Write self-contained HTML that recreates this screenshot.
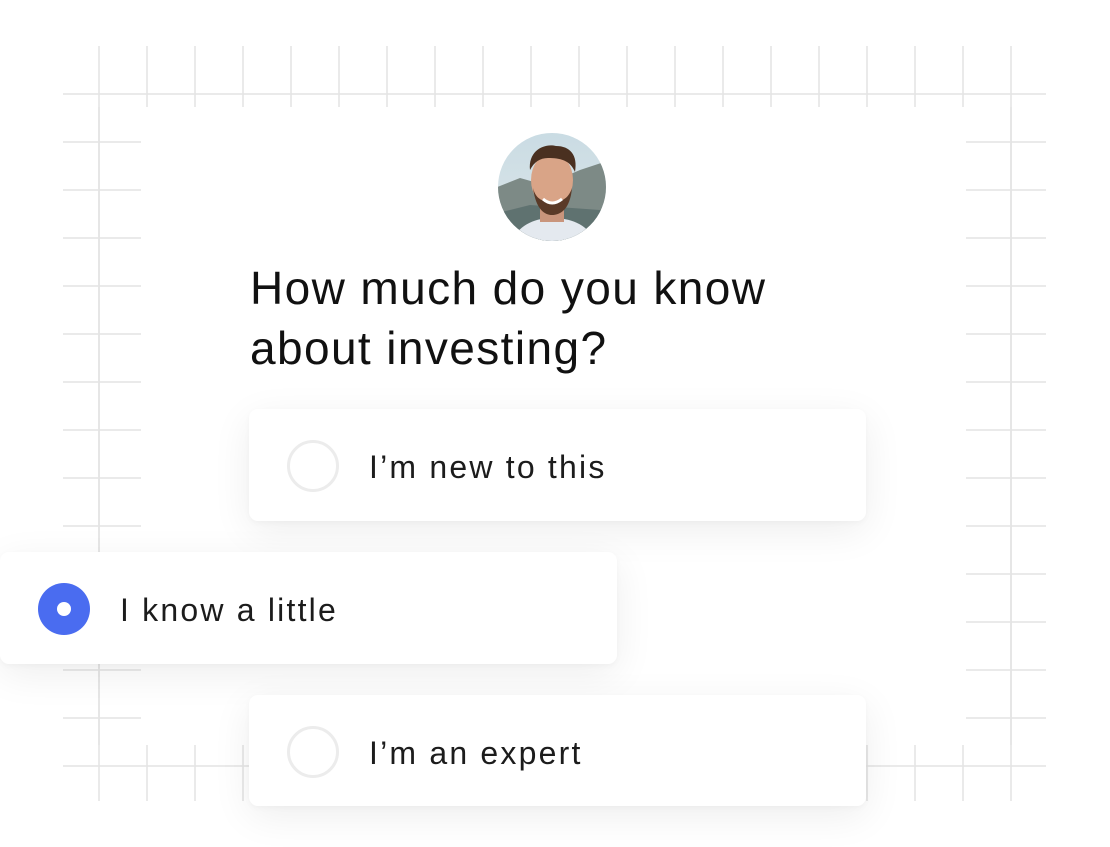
<!DOCTYPE html>
<html><head><style>
body{margin:0;width:1110px;height:847px;background:#fff;position:relative;overflow:hidden;font-family:"Liberation Sans",sans-serif;}
.abs{position:absolute}
.card{position:absolute;background:#fff;border-radius:9px;box-shadow:0 10px 40px rgba(0,0,0,0.07),0 2px 6px rgba(0,0,0,0.03);}
.card span{position:absolute;top:39px;font-size:32px;line-height:38px;color:#1c1c1c;letter-spacing:2.2px}
.radio{position:absolute;width:52px;height:52px;border:3px solid #ececec;border-radius:50%;box-sizing:border-box}
</style></head><body>
<svg class="abs" style="left:0;top:0" width="1110" height="847">
<g stroke="#e4e4e4" stroke-width="1.6">
<path d="M63 94H1046M63 766H1046"/>
<path d="M63 142H1046M63 190H1046M63 238H1046M63 286H1046M63 334H1046M63 382H1046M63 430H1046M63 478H1046M63 526H1046M63 574H1046M63 622H1046M63 670H1046M63 718H1046"/>
<path d="M99 46V801M147 46V801M195 46V801M243 46V801M291 46V801M339 46V801M387 46V801M435 46V801M483 46V801M531 46V801M579 46V801M627 46V801M675 46V801M723 46V801M771 46V801M819 46V801M867 46V801M915 46V801M963 46V801M1011 46V801"/>
</g>
<rect x="141" y="107" width="825" height="638" fill="#fff"/>
<path d="M99 107V745M1011 107V745" stroke="#e4e4e4" stroke-width="1.6"/>
<defs><clipPath id="c"><circle cx="552" cy="187" r="54"/></clipPath>
<linearGradient id="sky" x1="0" y1="0" x2="0" y2="1"><stop offset="0" stop-color="#c9dbe3"/><stop offset="1" stop-color="#dfe8ea"/></linearGradient></defs>
<g clip-path="url(#c)">
<rect x="490" y="130" width="130" height="120" fill="url(#sky)"/>
<path d="M490 190 L520 178 L545 185 L580 170 L610 160 L620 165 V250 H490Z" fill="#7d8a86"/>
<path d="M490 215 L530 205 L600 210 L620 200 V250 H490Z" fill="#5f7270"/>
<path d="M508 250 C515 225 535 218 552 218 C572 218 592 225 598 250Z" fill="#e4e9ef"/>
<rect x="540" y="200" width="24" height="22" fill="#c9957c"/>
<ellipse cx="552" cy="180" rx="21" ry="27" fill="#d9a487"/>
<path d="M533 188 C536 210 545 215 552 215 C560 215 570 210 572 188 C568 200 560 202 552 202 C544 202 536 200 533 188Z" fill="#5a3a28"/>
<path d="M530 170 C528 150 545 143 556 146 C570 146 578 155 575 172 C570 160 560 158 548 158 C540 158 534 162 530 170Z" fill="#4a3020"/>
<path d="M543 199 Q552 207 562 199" stroke="#fff" stroke-width="3" fill="none"/>
</g>
</svg>
<div class="abs" style="left:250px;top:258px;font-size:46px;line-height:60px;color:#111;letter-spacing:1.4px">How much do you know<br>about investing?</div>
<div class="card" style="left:249px;top:409px;width:617px;height:112px"><div class="radio" style="left:38px;top:31px"></div><span style="left:120px">I’m new to this</span></div>
<div class="card" style="left:0;top:552px;width:617px;height:112px"><div class="abs" style="left:38px;top:31px;width:52px;height:52px;border-radius:50%;background:#4a6cf0"></div><div class="abs" style="left:57px;top:50px;width:14px;height:14px;border-radius:50%;background:#fff"></div><span style="left:120px">I know a little</span></div>
<div class="card" style="left:249px;top:695px;width:617px;height:111px"><div class="radio" style="left:38px;top:31px"></div><span style="left:120px">I’m an expert</span></div>
</body></html>
